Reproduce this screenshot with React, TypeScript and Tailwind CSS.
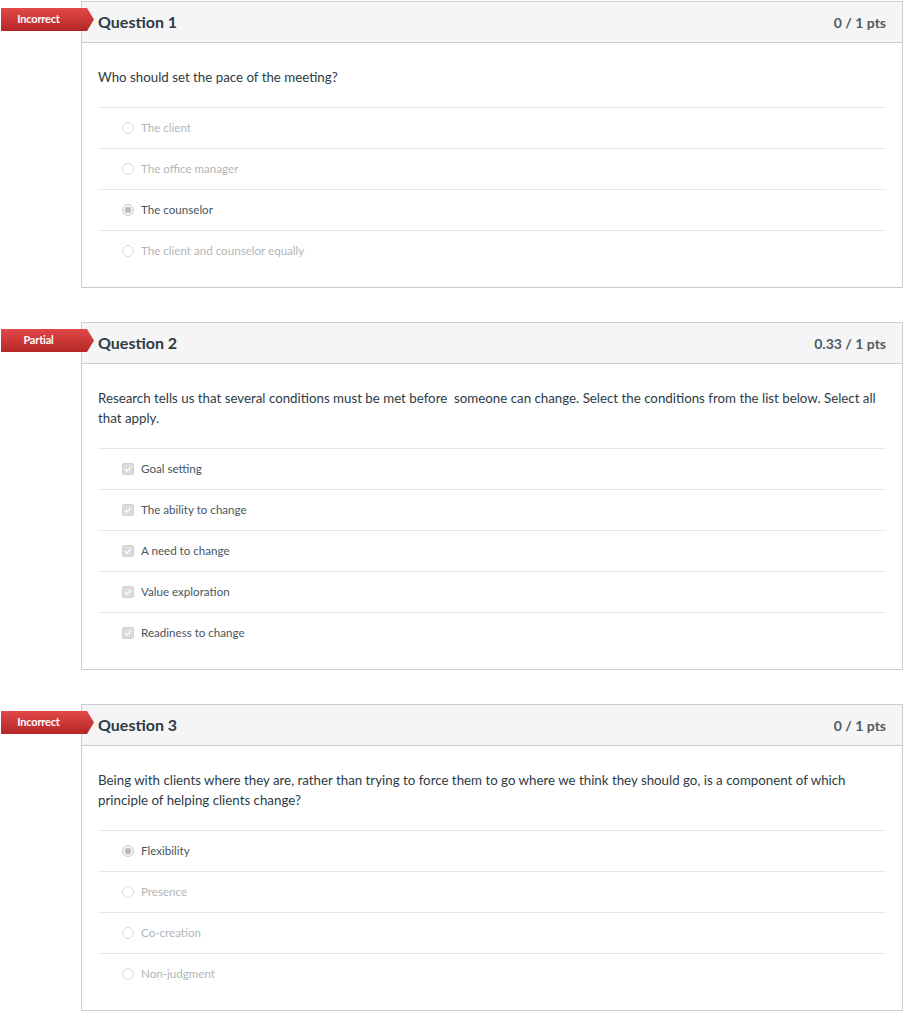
import React from 'react';

type Kind = 'radio' | 'check';

interface Answer {
  text: string;
  selected: boolean;
}

interface Question {
  num: number;
  status: string;
  points: string;
  text: string;
  kind: Kind;
  answers: Answer[];
}

const questions: Question[] = [
  {
    num: 1,
    status: 'Incorrect',
    points: '0 / 1 pts',
    text: 'Who should set the pace of the meeting?',
    kind: 'radio',
    answers: [
      { text: 'The client', selected: false },
      { text: 'The office manager', selected: false },
      { text: 'The counselor', selected: true },
      { text: 'The client and counselor equally', selected: false },
    ],
  },
  {
    num: 2,
    status: 'Partial',
    points: '0.33 / 1 pts',
    text: 'Research tells us that several conditions must be met before\u00a0 someone can change. Select the conditions from the list below. Select all that apply.',
    kind: 'check',
    answers: [
      { text: 'Goal setting', selected: true },
      { text: 'The ability to change', selected: true },
      { text: 'A need to change', selected: true },
      { text: 'Value exploration', selected: true },
      { text: 'Readiness to change', selected: true },
    ],
  },
  {
    num: 3,
    status: 'Incorrect',
    points: '0 / 1 pts',
    text: 'Being with clients where they are, rather than trying to force them to go where we think they should go, is a component of which principle of helping clients change?',
    kind: 'radio',
    answers: [
      { text: 'Flexibility', selected: true },
      { text: 'Presence', selected: false },
      { text: 'Co-creation', selected: false },
      { text: 'Non-judgment', selected: false },
    ],
  },
];

const Indicator = ({ kind, selected }: { kind: Kind; selected: boolean }) => {
  if (kind === 'check') {
    return (
      <span className="w-[12px] h-[12px] rounded-[2px] bg-[#dcdcdc] border border-[#d0d0d0] flex items-center justify-center">
        <svg viewBox="0 0 12 12" className="w-[10px] h-[10px]">
          <path d="M2.5 6.2 L5 8.5 L9.5 3.5" stroke="#ffffff" strokeWidth="1.6" fill="none" />
        </svg>
      </span>
    );
  }
  return (
    <span className={`w-[12px] h-[12px] rounded-full border flex items-center justify-center ${selected ? 'border-[#cfcfcf] bg-[#f0f0f0]' : 'border-[#dcdcdc] bg-white'}`}>
      {selected && <span className="w-[6px] h-[6px] rounded-full bg-[#b8b8b8]" />}
    </span>
  );
};

const QuestionCard = ({ q }: { q: Question }) => (
  <div className="relative border border-[#c7cdd1] bg-white mb-[34px]">
    <div
      className="absolute left-[-81px] top-[6px] w-[93px] h-[23px] bg-gradient-to-b from-[#e24848] to-[#b52626] [clip-path:polygon(0_0,86px_0,93px_50%,86px_100%,0_100%)] flex items-center"
    >
      <span className="w-[75px] text-center text-white text-[11px] font-bold tracking-[-0.2px]">{q.status}</span>
    </div>
    <div className="h-[41px] bg-[#f5f5f5] border-b border-[#c7cdd1] px-[16px] flex items-center justify-between">
      <span className="text-[16px] font-bold text-[#2d3b45]">Question {q.num}</span>
      <span className="text-[14px] font-bold text-[#4f5b66]">{q.points}</span>
    </div>
    <div className="px-[16px] pt-[24px] pb-[16px]">
      <p className="text-[13.3px] leading-[20px] text-[#2d3b45] mb-[20px] pr-[6px]">{q.text}</p>
      <div>
        {q.answers.map((a, i) => (
          <div key={i} className="h-[41px] border-t border-[#e6e8ea] flex items-center pl-[24px] gap-[7px]">
            <Indicator kind={q.kind} selected={a.selected} />
            <span className={`text-[11.6px] ${a.selected ? 'text-[#4a555e]' : 'text-[#b1b6ba]'}`}>{a.text}</span>
          </div>
        ))}
      </div>
    </div>
  </div>
);

export default function App() {
  return (
    <div className="min-h-screen bg-white pt-[1px] pl-[81px] pr-[16px] font-['Lato','Open_Sans',sans-serif]">
      {questions.map(q => (
        <QuestionCard key={q.num} q={q} />
      ))}
    </div>
  );
}
